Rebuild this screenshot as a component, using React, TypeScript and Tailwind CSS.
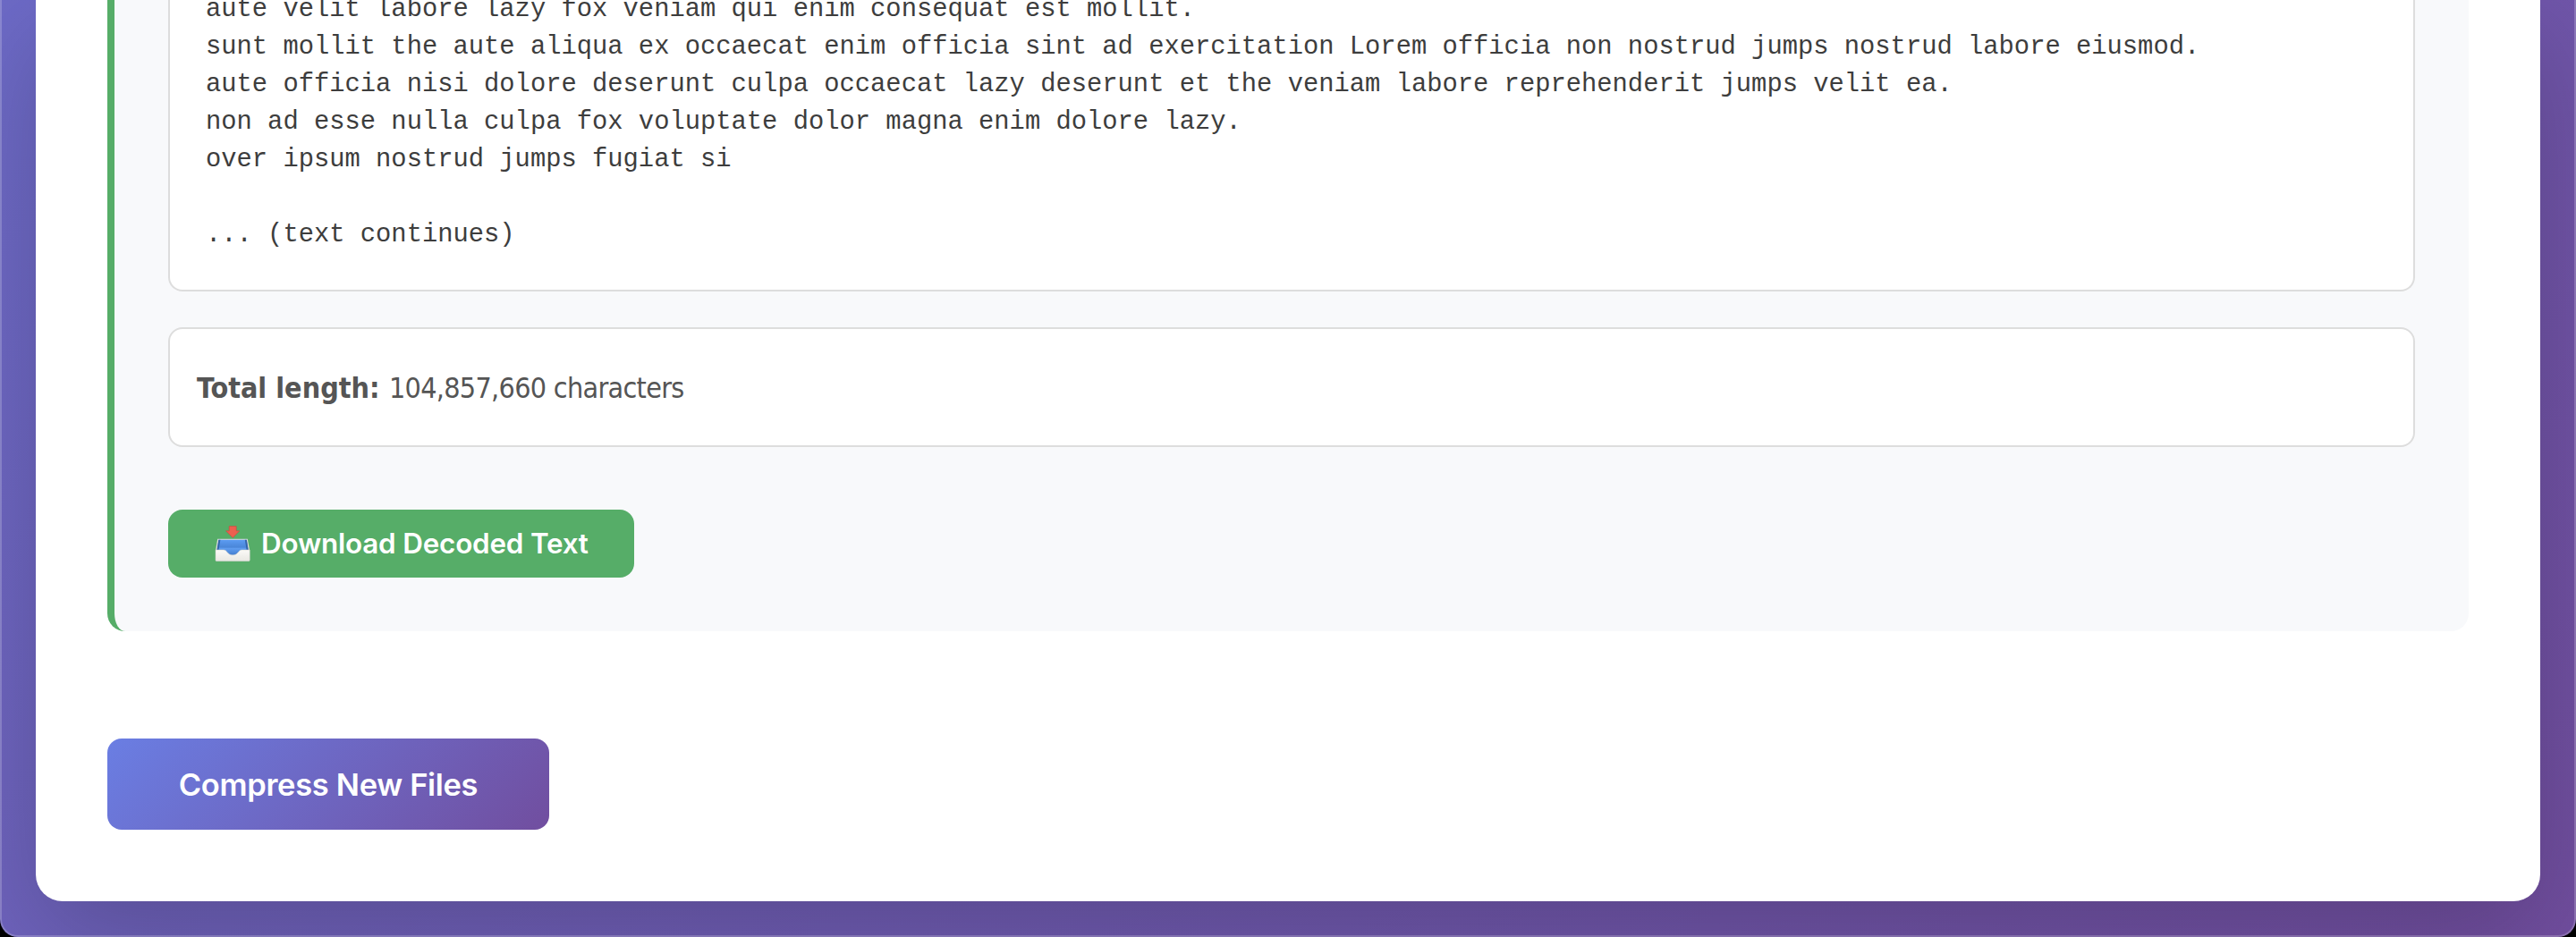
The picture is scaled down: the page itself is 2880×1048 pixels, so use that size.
const decodedLines = [
  "aute velit labore lazy fox veniam qui enim consequat est mollit.",
  "sunt mollit the aute aliqua ex occaecat enim officia sint ad exercitation Lorem officia non nostrud jumps nostrud labore eiusmod.",
  "aute officia nisi dolore deserunt culpa occaecat lazy deserunt et the veniam labore reprehenderit jumps velit ea.",
  "non ad esse nulla culpa fox voluptate dolor magna enim dolore lazy.",
  "over ipsum nostrud jumps fugiat si",
  "",
  "... (text continues)",
];

function InboxIcon() {
  return (
    <svg viewBox="0 0 40 40" className="h-10 w-10 shrink-0" aria-hidden="true">
      <defs>
        <linearGradient id="tray" x1="0" y1="0" x2="0" y2="1">
          <stop offset="0" stopColor="#5c9cf2" />
          <stop offset="0.45" stopColor="#4a86d8" />
          <stop offset="0.5" stopColor="#5f9df0" />
          <stop offset="1" stopColor="#3f78c8" />
        </linearGradient>
        <linearGradient id="front" x1="0" y1="0" x2="0" y2="1">
          <stop offset="0" stopColor="#fbfaf7" />
          <stop offset="1" stopColor="#e9e8e3" />
        </linearGradient>
      </defs>
      <path d="M3.2 14.8h33.600l2.400 12.600v11a1 1 0 0 1-1 1H2a1 1 0 0 1-1-1V27.400z" fill="#dcdcd8" />
      <path d="M4.400 15.800h31.400l2 12.200-9 6.500H12L2.400 28z" fill="url(#tray)" />
      <path d="M4.400 15.800 2.400 28h2l2-12.200zM35.800 15.800l2 12.200h-2l-2-12.200z" fill="#3465a8" />
      <path d="M1 27h8.800c2.200 0 3.200 1.300 4.400 2.800 1.600 2.100 3.300 3 6 3s4.400-.9 6-3c1.200-1.500 2.200-2.800 4.400-2.800h8.600v11.600a.8.8 0 0 1-.8.8H1.800a.8.8 0 0 1-.8-.8z" fill="url(#front)" stroke="#c9ccc6" strokeWidth="0.5" />
      <path d="M16.200 .6h8v5.200h3.600l-7.600 7.600-7.600-7.600h3.600z" fill="#ec5f4f" stroke="#c8483c" strokeWidth="0.6" />
    </svg>
  );
}

export default function App() {
  return (
    <div className="h-[1048px] w-[2880px] overflow-hidden bg-black">
      <div className="relative flex h-full flex-col overflow-hidden rounded-b-[20px] bg-[linear-gradient(135deg,#6a7ee3_0%,#714e9f_100%)] bg-[length:100%_3800px] bg-bottom px-10 pb-10">
        <main className="flex h-[1008px] flex-col items-start rounded-b-[30px] bg-white px-20 shadow-[0_40px_120px_rgba(0,0,0,0.2)]">
          <section className="h-[706px] w-full rounded-b-[20px] border-l-8 border-[#56ad68] bg-[#f8f9fb] px-15">
            <pre className="h-[326px] rounded-b-[16px] border-2 border-t-0 border-[#ddd] bg-white px-10 pt-[1px] font-['Liberation_Mono',monospace] text-[28.8px] leading-[42px] text-[#3d3d3d]">
              <div className="-mt-[11px]">
                {decodedLines.map((line, index) => (
                  <div key={index} className="h-[42px]">{line}</div>
                ))}
              </div>
            </pre>
            <div className="mt-10 flex h-[134px] items-center rounded-[16px] border-2 border-[#ddd] bg-white px-[30px]">
              <p className="pt-[2px] font-['DejaVu_Sans_Condensed','DejaVu_Sans',sans-serif] text-[32px] tracking-[-0.7px] whitespace-pre text-[#555] [font-stretch:condensed]">
                <strong className="mr-[2px] tracking-normal">Total length:</strong> 104,857,660 characters
              </p>
            </div>
            <button className="mt-[70px] flex h-[76px] w-[521px] items-center rounded-[16px] bg-[#56ad68] pl-[52px] font-['Inter',sans-serif] text-[31.4px] font-semibold tracking-[-0.2px] whitespace-nowrap text-white">
              <InboxIcon />
              <span className="ml-3 pt-px">Download Decoded Text</span>
            </button>
          </section>
          <button className="mt-[120px] flex h-[102px] w-[494px] items-center justify-center rounded-[16px] bg-[linear-gradient(135deg,#6a7ee3_0%,#714e9f_100%)] font-['Inter',sans-serif] text-[34.5px] font-semibold tracking-[-0.33px] whitespace-nowrap text-white">
            <span className="pt-px">Compress New Files</span>
          </button>
        </main>
        <div className="pointer-events-none absolute inset-0 rounded-b-[20px] border-2 border-t-0 border-white/20" />
      </div>
    </div>
  );
}
